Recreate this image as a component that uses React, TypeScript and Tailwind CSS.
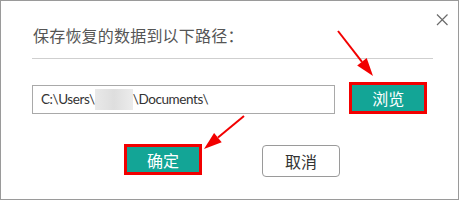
import React from "react";

export default function App() {
  const cjk = { fontFamily: '"Noto Sans CJK SC", "Noto Sans", sans-serif' };
  return (
    <div className="w-[462px] h-[200px] bg-white">
      <div
        className="relative w-[459px] h-[200px] border border-[#9a9a9a] bg-white flex flex-col px-[31px]"
        style={cjk}
      >
        <svg className="absolute left-[434px] top-[12px]" width="14" height="14" viewBox="0 0 14 14">
          <path d="M2 1.5 L12.5 12 M12.5 1.5 L2 12" stroke="#6b6b6b" strokeWidth="1.2" fill="none" />
        </svg>
        <div className="pt-[23px] text-[16px] leading-[22px] text-[#555555] pl-[1px] tracking-[0.2px]">保存恢复的数据到以下路径：</div>
        <div className="mt-[12px] h-px w-[401px] bg-[#cfcfcf]" />
        <div className="mt-[23px] flex items-start">
          <div
            className="mt-[3px] w-[309px] h-[29px] border border-[#a9a9a9] bg-white flex items-center pl-[8px] text-[13.5px] tracking-[-0.4px] text-[#333333]"
            style={{ fontFamily: 'Lato, "Noto Sans", sans-serif' }}
          >
            <span>C:\Users\</span>
            <span className="inline-block w-[38px] h-[21px] bg-gradient-to-r from-[#e9e9e9] via-[#dedede] to-[#ececec]" />
            <span>\Documents\</span>
          </div>
          <div className="ml-[14px] w-[79px] h-[32px] border-[3px] border-[#f20000] bg-[#13a596] flex items-center justify-center text-[16px] text-white">
            浏览
          </div>
        </div>
        <div className="mt-[30px] flex items-start">
          <div className="ml-[92px] w-[78px] h-[31px] border-[3px] border-[#f20000] bg-[#13a596] flex items-center justify-center text-[16px] text-white">
            确定
          </div>
          <div className="ml-[60px] mt-[1px] w-[78px] h-[32px] border border-[#9a9a9a] rounded-[4px] bg-white flex items-center justify-center text-[16px] text-[#333333]">
            取消
          </div>
        </div>
        <svg className="absolute left-0 top-0 pointer-events-none" width="462" height="200" viewBox="0 0 462 200">
          <line x1="337" y1="30" x2="361" y2="60.8" stroke="#f20000" strokeWidth="2" />
          <polygon points="372,75 356.2,64.5 365.7,57.1" fill="#f20000" />
          <line x1="243" y1="115" x2="217" y2="136.6" stroke="#f20000" strokeWidth="2" />
          <polygon points="203,148 213.1,132 220.7,141.2" fill="#f20000" />
        </svg>
      </div>
    </div>
  );
}
